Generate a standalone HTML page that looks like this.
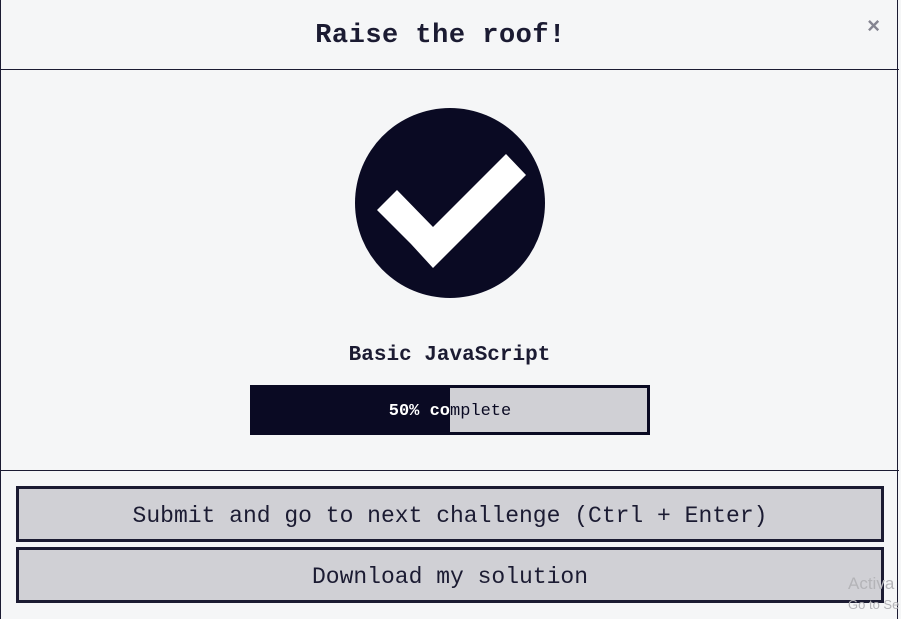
<!DOCTYPE html>
<html style="overflow:hidden;height:619px"><head><style>
body{margin:0;width:901px;height:619px;background:#f5f6f7;font-family:"Liberation Mono",monospace;position:relative;overflow:hidden;color:#1b1b32}
.frame{position:absolute;left:0;top:-2px;width:898px;height:623px;border:1px solid #1b1b32;box-sizing:border-box}
.hdr{position:absolute;left:0;top:69px;width:899px;height:1px;background:#1b1b32}
.ftr{position:absolute;left:0;top:470px;width:899px;height:1px;background:#1b1b32}
h1{position:absolute;left:0;width:881px;top:21px;margin:0;text-align:center;font-size:27px;font-weight:bold;letter-spacing:0.5px}
.x{position:absolute;left:867px;top:15px;font-size:22px;color:#858591;font-weight:bold}
.name{position:absolute;left:0;width:899px;top:344px;text-align:center;font-size:21px;font-weight:bold}
.bar{position:absolute;left:250px;top:385px;width:400px;height:50px;box-sizing:border-box;border:3px solid #0a0a23;background:#d0d0d5}
.fill{position:absolute;left:0;top:0;width:197px;height:44px;background:#0a0a23}
.lbl{position:absolute;left:0;top:2px;width:394px;height:44px;line-height:44px;text-align:center;font-size:17px;color:#0a0a23}
.lblw{position:absolute;left:0;top:0;width:197px;height:44px;overflow:hidden}
.lblw .lbl{color:#fff;font-weight:bold}
.btn{position:absolute;left:16px;width:868px;height:56px;box-sizing:border-box;border:3px solid #1b1b32;background:#d0d0d5;text-align:center;line-height:54px;font-size:23px}
.act{position:absolute;left:848px;top:574px;font-family:"Liberation Sans",sans-serif;color:#b4b4b8;font-size:17px;line-height:20px}
</style></head><body>
<div class="frame"></div>
<h1>Raise the roof!</h1>
<div class="x">×</div>
<div class="hdr"></div>
<svg style="position:absolute;left:355px;top:108px" width="190" height="190" viewBox="0 0 190 190"><circle cx="95" cy="95" r="95" fill="#0a0a23"/><path d="M22 102 L56 136 L78 160 L171 67 L151 46 L78 119 L42 82 Z" fill="#fff"/></svg>
<div class="name">Basic JavaScript</div>
<div class="bar"><div class="lbl">50% complete</div><div class="fill"></div><div class="lblw"><div class="lbl">50% complete</div></div></div>
<div class="ftr"></div>
<div class="btn" style="top:486px">Submit and go to next challenge (Ctrl + Enter)</div>
<div class="btn" style="top:547px">Download my solution</div>
<div class="act">Activa<br><span style="font-size:13px">Go to Se</span></div>
</body></html>
